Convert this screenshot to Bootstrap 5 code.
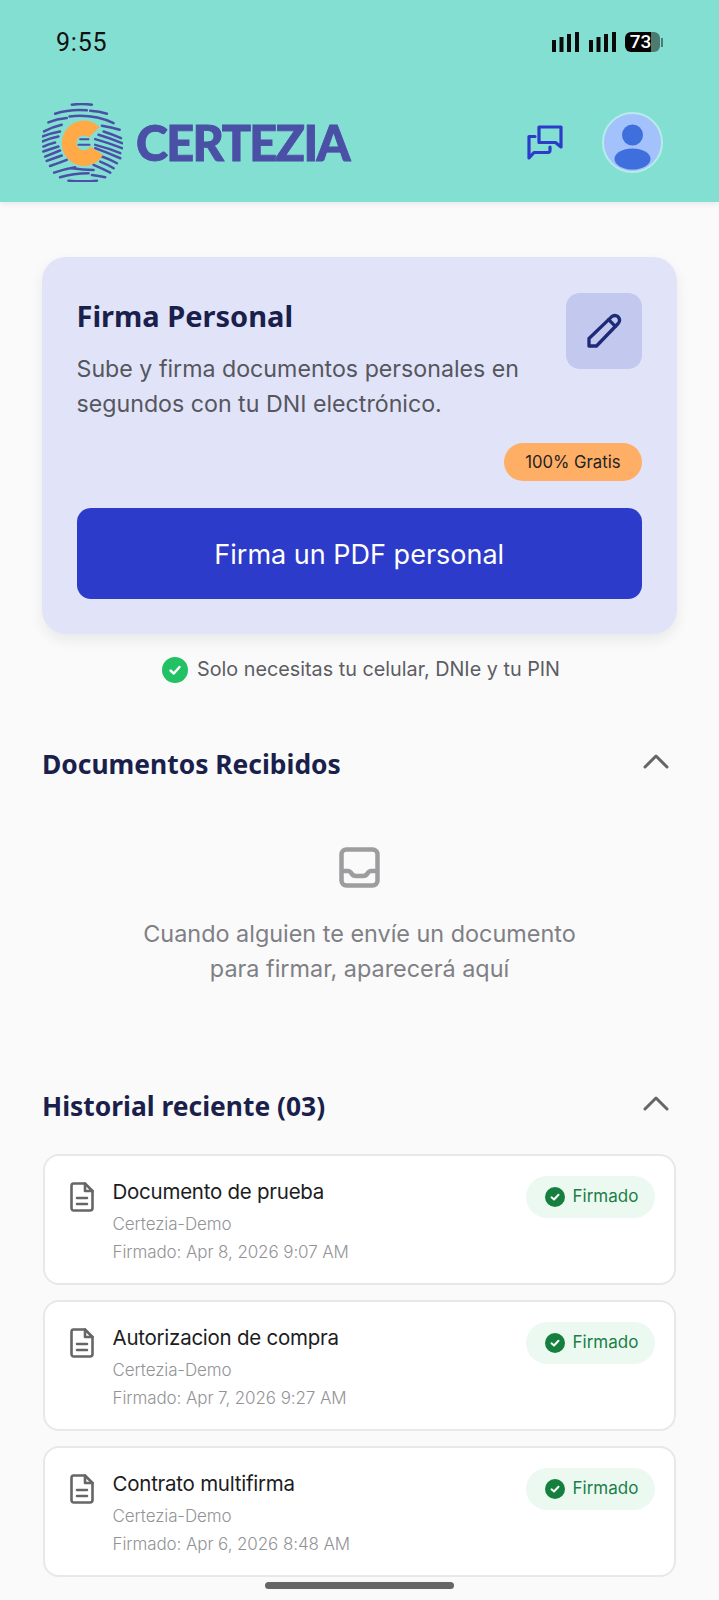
<!DOCTYPE html>
<html lang="es">
<head>
    <meta charset="UTF-8">
    <meta name="viewport" content="width=device-width, initial-scale=1.0">
    <title>Certezia</title>
    <link href="https://cdn.jsdelivr.net/npm/bootstrap@5.3.0/dist/css/bootstrap.min.css" rel="stylesheet">
    <script src="https://cdn.jsdelivr.net/npm/bootstrap@5.3.0/dist/js/bootstrap.bundle.min.js"></script>
    <style>
        body { width: 719px; height: 1600px; overflow: hidden; background: #fafafa; font-family: Inter, "Liberation Sans", sans-serif; }
        .app-top { height: 202px; background: #84dfd3; box-shadow: 0 2px 6px rgba(0,0,0,.08); }
        .status-row { height: 84px; padding: 0 56px; }
        .status-time { font: 400 25px Roboto, sans-serif; color: #111; letter-spacing: .8px; }
        .signal-set { gap: 10px; margin-right: 9px; }
        .batt { width: 35px; height: 20px; border-radius: 6px; background: linear-gradient(90deg, #050505 73%, #4c7b72 73%); color: #fff; font: 500 19px/20px Roboto, sans-serif; text-align: center; padding-right: 4px; }
        .batt-nub { width: 2px; height: 9px; margin-left: 1px; background: #4c7b72; }
        .brand-row { height: 117px; padding: 0 56px 0 42px; }
        .brand-name { font: 900 48.5px/1 Lato, sans-serif; color: #4a50a5; letter-spacing: -1.6px; margin-left: 13px; -webkit-text-stroke: .9px #4a50a5; }
        .avatar-ring { width: 61px; height: 61px; border-radius: 50%; background: #a3c1fb; border: 2px solid #b6ecea; overflow: hidden; margin-left: 39px; }
        .sign-card { margin: 55px 42px 0; height: 377px; padding: 36px 35px 35px 34.5px; background: #e1e4f8; border: 0; border-radius: 24px; box-shadow: 0 6px 14px rgba(0,0,0,.07); }
        .sign-title { font: 700 29px/1.2 "Noto Sans", sans-serif; color: #1a1f4b; margin: 6px 0 18px; }
        .sign-desc { font-size: 23.2px; line-height: 35px; color: #55565e; margin: 0; }
        .pen-box { width: 76px; height: 76px; background: #c3c8ef; border-radius: 14px; flex: none; }
        .free-wrap { margin-top: 21px; }
        .free-pill { background: #ffae66; color: #222; font-size: 16.7px; font-weight: 400; padding: 0 21.5px; height: 38px; line-height: 38px; border-radius: 19px; }
        .sign-btn { height: 91px; padding-top: 10px; background: #2c3bc9; border: 0; border-radius: 14px; font-size: 27px; font-weight: 400; color: #fff; }
        .hint-row { margin-top: 23px; height: 26px; padding-left: 3px; font-size: 19.8px; color: #5c5d63; gap: 9px; }
        .sect-head { padding: 0 50px 0 42px; }
        .recv-head { margin-top: 66px; }
        .hist-head { margin-top: 105px; }
        .sect-title { font: 700 26.4px/1.2 "Noto Sans", sans-serif; color: #1a1f4b; margin: 0; }
        .chev-up { margin-bottom: 6px; }
        .empty-box { text-align: center; color: #7f8085; font-size: 23.4px; line-height: 35px; }
        .empty-icon { margin-top: 66px; margin-bottom: 28px; }
        .doc-list { padding: 0 43px; gap: 15px; margin-top: 31.5px; }
        .doc-card { height: 131px; border: 2px solid #e8e8ea; border-radius: 16px; background: #fff; padding: 20px 19.5px 0 24.5px; }
        .doc-icon { flex: none; margin-top: 6px; }
        .doc-name { font-size: 20.5px; letter-spacing: -.25px; line-height: 32px; color: #1c1c1e; margin: 0 0 2px 19px; }
        .doc-sub { font-size: 17px; letter-spacing: -.1px; font-weight: 300; line-height: 28px; color: #939397; margin-left: 19px; }
        .ok-pill { height: 42px; width: 129px; background: #ecf9f0; color: #1a7f48; font-size: 17px; font-weight: 400; border-radius: 21px; gap: 8px; padding-left: 19px; }
        .home-bar { position: absolute; left: 265px; top: 1582px; width: 189px; height: 7px; background: #666; border-radius: 4px; }
    </style>
</head>
<body class="position-relative">
    <!-- cabecera -->
    <header class="app-top">
        <div class="status-row d-flex justify-content-between align-items-center">
            <span class="status-time">9:55</span>
            <div class="d-flex align-items-center">
                <div class="d-flex signal-set">
                    <svg width="27" height="20" viewBox="0 0 27 20" fill="#0a0a0a"><rect x="0" y="8" width="4" height="12"/><rect x="7.5" y="5" width="4" height="15"/><rect x="15" y="2" width="4" height="18"/><rect x="23" y="0" width="4" height="20"/></svg>
                    <svg width="27" height="20" viewBox="0 0 27 20" fill="#0a0a0a"><rect x="0" y="8" width="4" height="12"/><rect x="7.5" y="5" width="4" height="15"/><rect x="15" y="2" width="4" height="18"/><rect x="23" y="0" width="4" height="20"/></svg>
                </div>
                <div class="batt">73</div>
                <div class="batt-nub"></div>
            </div>
        </div>
        <div class="brand-row d-flex align-items-center">
            <svg width="81" height="79" viewBox="36 40 242 236" fill="none" stroke-linecap="round">
                <g stroke="#4a50a5" stroke-width="7.5">
                    <path d="M125 45Q155 41 185 45"/>
                    <path d="M75 72Q120 58 170 62"/><path d="M180 63Q208 65 230 72"/>
                    <path d="M55 98Q80 88 110 85"/><path d="M118 80Q190 72 250 100"/>
                    <path d="M42 125Q65 112 95 105"/><path d="M38 140Q60 130 90 125"/><path d="M36 155Q60 145 85 140"/>
                    <path d="M40 170Q55 163 75 158"/><path d="M40 185Q60 178 85 170"/><path d="M45 200Q65 192 90 182"/>
                    <path d="M50 213Q70 206 95 197"/><path d="M60 228Q85 220 110 210"/><path d="M72 248Q100 238 135 232"/>
                    <path d="M90 262Q130 250 175 250"/><path d="M115 272Q158 276 200 272"/><path d="M185 255Q205 258 225 262"/>
                    <path d="M215 108Q243 113 268 120"/><path d="M220 125Q248 134 272 145"/><path d="M205 135Q242 146 275 160"/>
                    <path d="M195 148Q238 160 275 175"/><path d="M195 165Q235 175 270 190"/><path d="M195 175Q235 190 270 205"/>
                    <path d="M215 200Q238 208 260 220"/><path d="M210 215Q232 224 250 235"/><path d="M190 225Q216 236 240 248"/>
                    <path d="M125 235Q158 240 190 240"/>
                </g>
                <path d="M208 112A66 68 0 1 0 218 195L180 170A22 22 0 1 1 176 143Z" fill="#ffa947"/>
                <g stroke="#4a50a5" stroke-width="6"><path d="M150 148H175"/><path d="M145 165H178"/></g>
            </svg>
            <span class="brand-name">CERTEZIA</span>
            <svg class="ms-auto" width="36" height="35" viewBox="0 0 36 35" fill="none" stroke="#2c3bc9" stroke-width="3.2" stroke-linejoin="round" stroke-linecap="round"><path d="M12 2H34V22L28.5 17.5H12Z"/><path d="M8 11.500H2V33L7 27.500H21Q23 27.500 23 25V22"/></svg>
            <div class="avatar-ring d-flex justify-content-center">
                <svg width="57" height="57" viewBox="0 0 57 57" fill="#3f6fdc"><circle cx="28.500" cy="21" r="10.500"/><ellipse cx="28.500" cy="45" rx="18" ry="10.500"/></svg>
            </div>
        </div>
    </header>

    <!-- firma personal -->
    <div class="card sign-card">
        <div class="d-flex justify-content-between">
            <div>
                <h2 class="sign-title">Firma Personal</h2>
                <p class="sign-desc">Sube y firma documentos personales en segundos con tu DNI electrónico.</p>
            </div>
            <div class="pen-box d-flex align-items-center justify-content-center">
                <svg width="40" height="40" viewBox="0 0 24 24" fill="none" stroke="#1e2a78" stroke-width="2" stroke-linejoin="round" stroke-linecap="round"><path d="M3 21V16.500L16.500 3.500Q18.500 1.800 20.500 3.500Q22.200 5.500 20.500 7.500L7.500 21Z"/><path d="M14.800 5.200L18.800 9.200"/></svg>
            </div>
        </div>
        <div class="d-flex justify-content-end free-wrap">
            <span class="badge free-pill">100% Gratis</span>
        </div>
        <button type="button" class="btn sign-btn w-100 mt-auto">Firma un PDF personal</button>
    </div>
    <div class="hint-row d-flex justify-content-center align-items-center">
        <svg width="26" height="26" viewBox="0 0 26 26"><circle cx="13" cy="13" r="13" fill="#22c164"/><path d="M8.500 13.500L11.800 16.500L17.500 10" fill="none" stroke="#fff" stroke-width="2.400" stroke-linecap="round" stroke-linejoin="round"/></svg>
        <span>Solo necesitas tu celular, DNIe y tu PIN</span>
    </div>

    <!-- documentos recibidos -->
    <div class="sect-head recv-head d-flex justify-content-between align-items-center">
        <h3 class="sect-title">Documentos Recibidos</h3>
        <svg class="chev-up" width="26" height="15" viewBox="0 0 26 15" fill="none" stroke="#666" stroke-width="3" stroke-linecap="round" stroke-linejoin="round"><path d="M2 13L13 2L24 13"/></svg>
    </div>
    <div class="empty-box">
        <svg class="d-block mx-auto empty-icon" width="41" height="41" viewBox="0 0 41 41" fill="none" stroke="#9d9d9f" stroke-width="4.500" stroke-linejoin="round"><rect x="2.500" y="2.500" width="36" height="36" rx="5"/><path d="M2.500 24H9Q11 24 12.500 26.500Q14 29 17 29H24Q27 29 28.500 26.500Q30 24 32 24H38.500"/></svg>
        <div>Cuando alguien te envíe un documento<br>para firmar, aparecerá aquí</div>
    </div>

    <!-- historial -->
    <div class="sect-head hist-head d-flex justify-content-between align-items-center">
        <h3 class="sect-title">Historial reciente (03)</h3>
        <svg class="chev-up" width="26" height="15" viewBox="0 0 26 15" fill="none" stroke="#666" stroke-width="3" stroke-linecap="round" stroke-linejoin="round"><path d="M2 13L13 2L24 13"/></svg>
    </div>
    <div class="doc-list d-flex flex-column" id="docList"></div>

    <div class="home-bar"></div>

    <script>
        const docs = [
            { name: 'Documento de prueba', date: 'Firmado: Apr 8, 2026 9:07 AM' },
            { name: 'Autorizacion de compra', date: 'Firmado: Apr 7, 2026 9:27 AM' },
            { name: 'Contrato multifirma', date: 'Firmado: Apr 6, 2026 8:48 AM' }
        ];
        const list = document.getElementById('docList');
        docs.forEach(doc => {
            const row = document.createElement('div');
            row.className = 'doc-card d-flex align-items-start';
            row.innerHTML = `
                <svg class="doc-icon" width="24" height="30" viewBox="0 0 24 30" fill="none" stroke="#666" stroke-width="2.600" stroke-linejoin="round" stroke-linecap="round"><path d="M3.500 1.500H15L22.500 9V26Q22.500 28.500 20 28.500H4Q1.500 28.500 1.500 26V4Q1.500 1.500 3.500 1.500Z"/><path d="M15 1.500V9H22.500"/><path d="M7 16H17M7 22H17"/></svg>
                <div class="flex-grow-1">
                    <div class="doc-name">${doc.name}</div>
                    <div class="doc-sub">Certezia-Demo</div>
                    <div class="doc-sub">${doc.date}</div>
                </div>
                <span class="ok-pill d-flex align-items-center">
                    <svg width="20" height="20" viewBox="0 0 20 20" class="flex-shrink-0"><circle cx="10" cy="10" r="10" fill="#15803d"/><path d="M6.500 10.300L9 12.500L13.500 7.800" fill="none" stroke="#fff" stroke-width="2" stroke-linecap="round" stroke-linejoin="round"/></svg>
                    Firmado
                </span>`;
            list.appendChild(row);
        });
    </script>
</body>
</html>
